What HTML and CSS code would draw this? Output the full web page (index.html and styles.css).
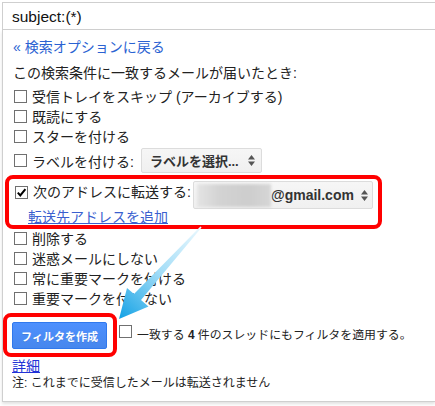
FILE: index.html
```html
<!DOCTYPE html>
<html lang="ja">
<head>
<meta charset="utf-8">
<link rel="stylesheet" href="styles.css">
</head>
<body>
<div class="search">subject:(*)</div>
<div class="panel">
  <div class="back">« 検索オプションに戻る</div>
  <div class="desc">この検索条件に一致するメールが届いたとき:</div>
  <div class="row"><span class="cb"></span><span>受信トレイをスキップ (アーカイブする)</span></div>
  <div class="row"><span class="cb"></span><span>既読にする</span></div>
  <div class="row"><span class="cb"></span><span>スターを付ける</span></div>
  <div class="row label-row"><span class="cb"></span><span>ラベルを付ける:</span>
    <span class="select label-select"><span class="sel-text">ラベルを選択...</span>
      <svg class="updown" width="7" height="11" viewBox="0 0 7 11"><path d="M0 4.5 L3.5 0 L7 4.5 Z M0 6.5 L3.5 11 L7 6.5 Z" fill="#555"/></svg>
    </span>
  </div>
  <div class="redbox">
    <div class="fwd-row">
      <span class="cb checked"><svg width="11" height="11" viewBox="0 0 11 11"><path d="M1.8 5.6 L4.3 8.4 L9.4 2.2" fill="none" stroke="#000" stroke-width="2"/></svg></span>
      <span class="fwd-text">次のアドレスに転送する:</span>
      <span class="select email-select">
        <span class="blur"></span>
        <span class="gmail">@gmail.com</span>
        <svg class="updown" width="7" height="11" viewBox="0 0 7 11"><path d="M0 4.5 L3.5 0 L7 4.5 Z M0 6.5 L3.5 11 L7 6.5 Z" fill="#555"/></svg>
      </span>
    </div>
    <div class="add-link">転送先アドレスを追加</div>
  </div>
  <div class="row"><span class="cb"></span><span>削除する</span></div>
  <div class="row"><span class="cb"></span><span>迷惑メールにしない</span></div>
  <div class="row"><span class="cb"></span><span>常に重要マークを付ける</span></div>
  <div class="row"><span class="cb"></span><span>重要マークを付けない</span></div>
  <div class="btn-row">
    <div class="btn-frame"><div class="btn">フィルタを作成</div></div>
    <span class="cb apply-cb"></span>
    <span class="apply-text">一致する <b>4</b> 件のスレッドにもフィルタを適用する。</span>
  </div>
  <div class="detail">詳細</div>
  <div class="note">注: これまでに受信したメールは転送されません</div>
</div>
<svg class="arrow" width="435" height="406" viewBox="0 0 435 406">
  <defs>
    <linearGradient id="ag" gradientUnits="userSpaceOnUse" x1="201" y1="227" x2="119" y2="318">
      <stop offset="0" stop-color="#eaf8fe"/>
      <stop offset="0.5" stop-color="#a3ddf7"/>
      <stop offset="1" stop-color="#14a2e5"/>
    </linearGradient>
  </defs>
  <polygon points="200.4,226.5 201.6,227.5 141,300 148.5,306.5 119,319 127,288 134,294" fill="url(#ag)"/>
</svg>
</body>
</html>
```
FILE: styles.css
```css
html, body {
  margin: 0;
  padding: 0;
  background: #fff;
}
body {
  position: relative;
  width: 435px;
  height: 406px;
  overflow: hidden;
  font-family: "Liberation Sans", "Noto Sans CJK JP", sans-serif;
  color: #222;
  font-size: 14px;
}
.search {
  margin: 2px 0 0 2px;
  border: 1px solid #cfcfcf;
  border-right: none;
  height: 25px;
  padding: 1px 0 0 9px;
  line-height: 26px;
  font-size: 15.5px;
  color: #111;
}
.panel {
  margin-left: 2px;
  border-left: 1px solid #cfcfcf;
  border-bottom: 1px solid #cfcfcf;
  box-shadow: 0 2px 3px rgba(0, 0, 0, 0.12);
  padding: 7px 0 10px 10px;
}
.back {
  line-height: 20px;
  color: #2a62d2;
  margin-bottom: 6px;
}
.desc {
  line-height: 20px;
  margin-bottom: 3px;
}
.row {
  display: flex;
  align-items: center;
  height: 20px;
  white-space: nowrap;
}
.cb {
  display: inline-flex;
  align-items: center;
  justify-content: center;
  box-sizing: border-box;
  width: 13px;
  height: 13px;
  border: 1px solid #707070;
  background: #fff;
  margin-left: 1px;
  margin-right: 5px;
  flex: none;
}
.label-row {
  height: 25px;
  margin-top: 2px;
}
.select {
  display: inline-flex;
  align-items: center;
  box-sizing: border-box;
  background: linear-gradient(#f6f6f6, #f0f0f0);
  border: 1px solid #dcdcdc;
  border-radius: 2px;
}
.label-select {
  width: 121px;
  height: 25px;
  margin-left: 7px;
  padding: 0 6px 0 8px;
  justify-content: space-between;
  font-size: 13px;
  font-weight: bold;
  color: #333;
}
.updown {
  flex: none;
}
.redbox {
  box-sizing: border-box;
  width: 377px;
  margin: 2px 0 -1px -8px;
  border: 4px solid #f00;
  border-radius: 8px;
  padding: 3px 5px 0 5px;
}
.fwd-row {
  display: flex;
  align-items: flex-start;
  white-space: nowrap;
}
.fwd-row .cb {
  margin-top: 4px;
}
.fwd-text {
  line-height: 20px;
}
.email-select {
  margin-left: auto;
  margin-top: -1px;
  width: 180px;
  height: 28px;
  padding: 0 5px 0 3px;
}
.blur {
  width: 74px;
  height: 23px;
  flex: none;
  background: linear-gradient(90deg, #e4e4e4, #d3d3d3 30%, #cdcdcd 70%, #d6d6d6);
  filter: blur(1.5px);
}
.gmail {
  font-weight: bold;
  font-size: 14px;
  color: #333;
  margin-right: 7px;
}
.add-link {
  line-height: 16px;
  margin-left: 14px;
  color: #3a5fcf;
  text-decoration: underline;
}
.btn-row {
  display: flex;
  align-items: center;
  margin-top: 5px;
  white-space: nowrap;
}
.btn-frame {
  margin-left: -10px;
  border: 4px solid #f00;
  border-radius: 8px;
  padding: 5px 6px 4px 5px;
}
.btn {
  box-sizing: border-box;
  width: 95px;
  height: 27px;
  display: flex;
  align-items: center;
  justify-content: center;
  background: linear-gradient(#4d90fe, #4787ed);
  border: 1px solid #3079ed;
  border-radius: 2px;
  color: #fff;
  font-weight: bold;
  font-size: 11px;
  text-shadow: 0 1px rgba(0, 0, 0, 0.1);
}
.apply-cb {
  align-self: flex-start;
  margin-top: 12px;
  margin-left: 2px;
  margin-right: 5px;
}
.apply-text {
  font-size: 11.9px;
  line-height: 20px;
}
.apply-text b {
  font-family: "Liberation Sans", sans-serif;
}
.detail {
  line-height: 18px;
  margin-left: -1px;
  color: #2232d6;
  text-decoration: underline;
}
.note {
  font-size: 12px;
  line-height: 16px;
  margin-left: -1px;
}
.arrow {
  position: absolute;
  top: 0;
  left: 0;
  pointer-events: none;
}
```
